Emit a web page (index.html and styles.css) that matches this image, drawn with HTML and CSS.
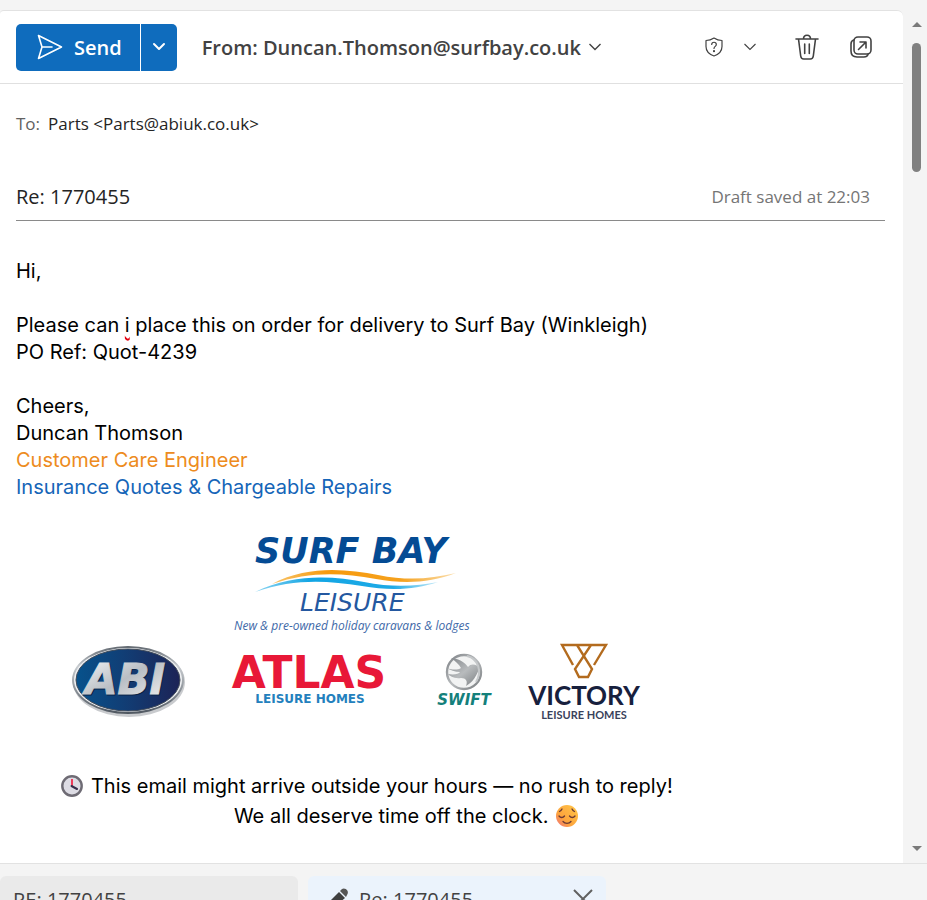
FILE: index.html
```
<!DOCTYPE html>
<html lang="en">
<head>
    <meta charset="UTF-8">
    <meta name="viewport" content="width=device-width, initial-scale=1.0">
    <title>Re: 1770455</title>
    <link rel="stylesheet" href="styles.css">
</head>
<body>
    <div class="workspace">
        <main class="compose">
            <header class="toolbar">
                <div class="send-group">
                    <button class="send" type="button">
                        <svg width="26" height="26" viewBox="0 0 26 26" fill="none" stroke="currentColor" stroke-width="1.6" stroke-linejoin="round">
                            <path d="M1.5 1.5 L24.5 13 L1.5 24.5 L5 13 Z M5 13 H15" stroke-linecap="round"/>
                        </svg>
                        Send
                    </button>
                    <button class="send-more" type="button" aria-label="Send options">
                        <svg width="12" height="8" viewBox="0 0 12 8" fill="none" stroke="currentColor" stroke-width="2" stroke-linecap="round" stroke-linejoin="round"><path d="M1 1 L6 6 L11 1"/></svg>
                    </button>
                </div>
                <button class="from" type="button">
                    From: Duncan.Thomson@surfbay.co.uk
                    <svg width="12" height="8" viewBox="0 0 12 8" fill="none" stroke="currentColor" stroke-width="1.4"><path d="M.5 1 L6 6.500 L11.500 1"/></svg>
                </button>
                <div class="tools">
                    <button class="tool sensitivity" type="button" aria-label="Sensitivity">
                        <svg width="18" height="20" viewBox="0 0 18 20" fill="none" stroke="currentColor" stroke-width="1.2" stroke-linejoin="round" stroke-linecap="round">
                            <path d="M9 1 C11.500 2.700 14 3.500 17 3.500 V9.500 C17 14 14 17.200 9 19 C4 17.200 1 14 1 9.500 V3.500 C4 3.500 6.500 2.700 9 1 Z"/>
                            <path d="M6.700 7.500 C6.700 4.500 11.300 4.500 11.300 7.500 C11.300 9.400 9 9.300 9 11.500"/>
                            <circle cx="9" cy="14.200" r=".5" fill="currentColor"/>
                        </svg>
                        <svg class="chevron" width="12" height="8" viewBox="0 0 12 8" fill="none" stroke="currentColor" stroke-width="1.1"><path d="M.5 1 L6 6.500 L11.500 1"/></svg>
                    </button>
                    <button class="tool" type="button" aria-label="Discard">
                        <svg width="24" height="26" viewBox="0 0 24 26" fill="none" stroke="currentColor" stroke-width="1.6" stroke-linecap="round">
                            <path d="M1 5 H23 M8.500 5 C8.500 0 15.500 0 15.500 5 M3.500 5 L5.700 22 C5.900 23.800 7 25 8.700 25 H15.300 C17 25 18.100 23.800 18.300 22 L20.500 5 M9.700 10 V19.500 M14.300 10 V19.500"/>
                        </svg>
                    </button>
                    <button class="tool" type="button" aria-label="Open in new window">
                        <svg width="22" height="22" viewBox="0 0 22 22" fill="none" stroke="currentColor" stroke-width="1.6" stroke-linecap="round" stroke-linejoin="round">
                            <rect x="4" y="1" width="17" height="17" rx="4"/>
                            <path d="M3.700 4 C2 4.500 1 6 1 8 V15 C1 18.800 3.200 21 7 21 H14 C16 21 17.500 20 18 18.500"/>
                            <path d="M8.500 13.500 L16 6 M10 6 H16 V12"/>
                        </svg>
                    </button>
                </div>
            </header>

            <div class="recipients">
                <span class="label">To:</span>
                <span>Parts &lt;Parts@abiuk.co.uk&gt;</span>
            </div>

            <div class="subject-row">
                <input class="subject" type="text" value="Re: 1770455" aria-label="Subject">
                <span class="saved">Draft saved at 22:03</span>
            </div>

            <article class="message">
                <p>Hi,</p>
                <p>Please can <span class="misspelt">i</span> place this on order for delivery to Surf Bay (Winkleigh)<br>PO Ref: Quot-4239</p>
                <p>
                    Cheers,<br>
                    Duncan Thomson<br>
                    <span class="role">Customer Care Engineer</span><br>
                    <span class="team">Insurance Quotes &amp; Chargeable Repairs</span>
                </p>

                <div class="logos">
                    <svg class="surfbay" width="250" height="104" viewBox="0 0 250 104">
                        <defs>
                            <linearGradient id="sand"><stop offset="0" stop-color="#f7c56e"/><stop offset=".3" stop-color="#f79a0c"/><stop offset=".7" stop-color="#f5a11d"/><stop offset="1" stop-color="#fbe0b0"/></linearGradient>
                            <linearGradient id="sea"><stop offset="0" stop-color="#8fd6f2"/><stop offset=".3" stop-color="#12a5e4"/><stop offset=".75" stop-color="#1eaae6"/><stop offset="1" stop-color="#c7eaf8"/></linearGradient>
                        </defs>
                        <text class="surf-name" x="25" y="30">SURF BAY</text>
                        <path fill="url(#sand)" d="M42 51 C78 32 116 36 148 42 C178 48 200 46 226 40 C200 50 174 51 146 46 C108 39 78 39 42 51 Z"/>
                        <path fill="url(#sea)" d="M25 59 C63 40 104 43 134 49 C164 55 187 53 208 49 C185 57 160 58 132 53 C94 47 63 46 25 59 Z"/>
                        <text class="surf-leisure" x="70" y="78">LEISURE</text>
                        <text class="surf-tag" x="4" y="97">New &amp; pre-owned holiday caravans &amp; lodges</text>
                    </svg>
                    <div class="brands">
                        <svg width="116" height="74" viewBox="0 0 116 74">
                            <defs>
                                <linearGradient id="abi-blue"><stop offset="0" stop-color="#07528c"/><stop offset=".5" stop-color="#123c73"/><stop offset="1" stop-color="#1c2356"/></linearGradient>
                                <linearGradient id="steel" x2="1" y2="1"><stop offset="0" stop-color="#fafafa"/><stop offset=".5" stop-color="#b9bec4"/><stop offset="1" stop-color="#f3f3f3"/></linearGradient>
                                <linearGradient id="rim" x2="0" y2="1"><stop offset="0" stop-color="#5f666e"/><stop offset=".3" stop-color="#c8ccd0"/><stop offset="1" stop-color="#4e565f"/></linearGradient>
                            </defs>
                            <ellipse cx="59" cy="38" rx="56" ry="35" fill="#c9cbce"/>
                            <ellipse cx="58" cy="36" rx="56" ry="34" fill="url(#rim)"/>
                            <ellipse cx="58" cy="36" rx="54" ry="32" fill="#eef0f2"/>
                            <ellipse cx="58" cy="36" rx="52" ry="31" fill="url(#abi-blue)" stroke="#444e5c"/>
                            <text class="abi-name" x="16" y="51" fill="#0b2347" stroke="#0b2347">ABI</text>
                            <text class="abi-name" x="15" y="50" fill="url(#steel)" stroke="url(#steel)">ABI</text>
                        </svg>
                        <svg width="182" height="64" viewBox="0 0 182 64">
                            <text class="atlas-name" x="90" y="39" text-anchor="middle">ATLAS</text>
                            <text class="atlas-tag" x="91" y="54" text-anchor="middle">LEISURE HOMES</text>
                        </svg>
                        <svg width="60" height="58" viewBox="0 0 60 58">
                            <defs><linearGradient id="silver" x2="1" y2="1"><stop offset="0" stop-color="#7e8286"/><stop offset=".5" stop-color="#b8bbbd"/><stop offset="1" stop-color="#777b7e"/></linearGradient></defs>
                            <circle cx="30" cy="20" r="17" fill="#f2f3f3" stroke="url(#silver)" stroke-width="2.400"/>
                            <path fill="url(#silver)" d="M17 6 C27 7 31 11 34 15 C37 11 42 12 47 16 C43 18 43 28 32 34 C34 29 32 26 27 26 C20 27 16 24 14 22 C20 23 25 22 26 20 C21 20 16 18 13 16 C18 18 24 18 27 16 C25 12 21 9 17 6 Z"/>
                            <path d="M33 4 C45 7 48 20 42 30" fill="none" stroke="#c5c8ca" stroke-width="2"/>
                            <text class="swift-name" x="30" y="53" text-anchor="middle">SWIFT</text>
                        </svg>
                        <svg width="114" height="80" viewBox="0 0 114 80">
                            <path d="M46 24 L35 4 H50 L65 28 L61 36 H52 L48 28 L64 4 H79 L67 24 M50 4 H64" fill="none" stroke="#b36b1e" stroke-width="2.400"/>
                            <text class="victory-name" x="57" y="64" text-anchor="middle">VICTORY</text>
                            <text class="victory-tag" x="57" y="78" text-anchor="middle">LEISURE HOMES</text>
                        </svg>
                    </div>
                </div>

                <div class="note">
                    <p>
                        <svg class="emoji" width="24" height="24" viewBox="0 0 24 24">
                            <circle cx="12" cy="12" r="9.700" fill="#dddce4" stroke="#6e6b74" stroke-width="2.400"/>
                            <path d="M12 12 V5" stroke="#ee3e5d" stroke-width="2"/>
                            <path d="M11.500 12 L17 15" stroke="#37304d" stroke-width="2" stroke-linecap="round"/>
                        </svg>
                        This email might arrive outside your hours — no rush to reply!
                    </p>
                    <p class="indent">
                        We all deserve time off the clock.
                        <svg class="emoji" width="24" height="24" viewBox="0 0 24 24">
                            <defs><linearGradient id="face" x1="1" y1="0" x2="0" y2="1"><stop offset="0" stop-color="#ffc84a"/><stop offset=".65" stop-color="#fda33c"/><stop offset="1" stop-color="#ef6e85"/></linearGradient></defs>
                            <circle cx="12" cy="12" r="11" fill="url(#face)"/>
                            <path d="M4 12 C5.500 14 8 14 9.500 12 M14.500 12 C16 14 18.500 14 20 12 M8 17.500 C10 20 14 20 16 17.500 M4.500 7.500 C5.500 7 6.500 6 7 5 M19.500 7.500 C18.500 7 17.500 6 17 5" fill="none" stroke="#6b3a35" stroke-width="1.300" stroke-linecap="round"/>
                        </svg>
                    </p>
                </div>
            </article>
        </main>

        <div class="scrollbar" aria-hidden="true">
            <span class="arrow-up"></span>
            <span class="track"><span class="thumb"></span></span>
            <span class="arrow-down"></span>
        </div>
    </div>

    <nav class="tabs">
        <div class="tab"><a href="#">RE: 1770455</a></div>
        <div class="tab active">
            <svg width="24" height="24" viewBox="0 0 24 24" fill="#3f3f3f">
                <path d="M1 23 L3 16 L14 5 L20 11 L8 21 Z"/>
                <path d="M15 4 L17 2 C20 0 25 4 22 8 L21 10 Z" fill="#555"/>
            </svg>
            <a href="#">Re: 1770455</a>
            <button class="close" type="button" aria-label="Close">
                <svg width="20" height="20" viewBox="0 0 20 20" fill="none" stroke="currentColor" stroke-width="2"><path d="M1 1 L19 19 M19 1 L1 19"/></svg>
            </button>
        </div>
    </nav>
</body>
</html>
```

FILE: styles.css
```
* {
    box-sizing: border-box;
}
body {
    display: flex;
    flex-direction: column;
    height: 100vh;
    margin: 0;
    padding-top: 10px;
    overflow: hidden;
    background-color: #f4f4f4;
    color: #242424;
    font-family: "Open Sans", "Noto Sans", sans-serif;
    font-size: 17px;
}
p {
    margin: 0;
}
svg {
    flex: none;
    overflow: visible;
}
button {
    padding: 0;
    border: none;
    background: none;
    color: inherit;
    font: inherit;
    cursor: pointer;
}
.workspace {
    display: flex;
    flex: 1;
    min-height: 0;
    border-bottom: 1px solid #e2e2e2;
}
.compose {
    flex: 1;
    overflow: hidden;
    border-top: 1px solid #e2e2e2;
    border-top-right-radius: 6px;
    border-top-left-radius: 4px;
    background: white;
}

/* Toolbar */
.toolbar {
    display: flex;
    align-items: center;
    height: 73px;
    padding: 0 31px 0 16px;
    border-bottom: 1px solid #e0e0e0;
}
.send-group {
    display: flex;
    height: 47px;
    border-radius: 5px;
    overflow: hidden;
    background-color: #0f6cbd;
    color: white;
}
.send {
    display: flex;
    align-items: center;
    gap: 11px;
    padding: 0 18px 0 21px;
    font-size: 20px;
    font-weight: 600;
}
.send-more {
    display: flex;
    align-items: center;
    justify-content: center;
    width: 37px;
    border-left: 1px solid white;
}
.from {
    display: flex;
    align-items: center;
    gap: 8px;
    margin-left: 25px;
    color: #424242;
    font-size: 20px;
    font-weight: 600;
}
.tools {
    display: flex;
    align-items: center;
    gap: 31px;
    margin-left: auto;
    color: #424242;
}
.tool {
    display: flex;
    align-items: center;
}
.sensitivity {
    gap: 21px;
    margin-right: 8px;
}

/* Address and subject */
.recipients {
    display: flex;
    gap: 8px;
    padding: 27px 16px 0;
    line-height: 25px;
}
.label {
    color: #616161;
}
.subject-row {
    display: flex;
    align-items: center;
    height: 48px;
    margin: 37px 18px 0 16px;
    padding-right: 15px;
    border-bottom: 1px solid #8a8a8a;
}
.subject {
    flex: 1;
    min-width: 0;
    padding: 0;
    border: none;
    outline: none;
    color: #242424;
    font: inherit;
    font-size: 20px;
}
.saved {
    color: #757575;
}

/* Message body */
.message {
    padding: 37px 16px;
    color: black;
    font-family: Inter, Roboto, "Liberation Sans", sans-serif;
    font-size: 20px;
    line-height: 27px;
}
.message > p {
    margin-bottom: 27px;
}
.misspelt {
    text-decoration: underline wavy #e3000f 2px;
    text-underline-offset: 2px;
}
.role {
    color: #ed8b20;
}
.team {
    color: #1565b8;
}
.logos {
    display: flex;
    flex-direction: column;
    gap: 4px;
    width: 680px;
    padding-top: 5px;
    padding-left: 54px;
}
.surfbay {
    margin-left: 160px;
}
.brands {
    display: flex;
    align-items: center;
    gap: 33px;
}

/* Logo lettering */
.surf-name {
    fill: #044b94;
    font: italic bold 35px "DejaVu Sans", sans-serif;
}
.surf-leisure {
    fill: #2458a0;
    font: italic 25px "DejaVu Sans", sans-serif;
}
.surf-tag {
    fill: #4169a8;
    font: italic 12px "Open Sans", sans-serif;
}
.abi-name {
    font: italic bold 42px "DejaVu Sans", sans-serif;
}
.atlas-name {
    fill: #e81837;
    font: bold 44px "DejaVu Sans", sans-serif;
}
.atlas-tag {
    fill: #2380bd;
    font: bold 12px "DejaVu Sans", sans-serif;
}
.swift-name {
    fill: #14807b;
    font: italic bold 15px "DejaVu Sans", sans-serif;
}
.victory-name {
    fill: #17203d;
    font: bold 26px Lato, sans-serif;
}
.victory-tag {
    fill: #3a425b;
    font: bold 11px Lato, sans-serif;
}

/* Closing note */
.note {
    width: 700px;
    margin-top: 50px;
    line-height: 30px;
    text-align: center;
}
.indent {
    padding-left: 82px;
}
.emoji {
    margin: 0 1px;
    vertical-align: -5px;
}

/* Scrollbar */
.scrollbar {
    display: flex;
    flex-direction: column;
    align-items: center;
    width: 24px;
    padding: 12px 0 12px 3px;
}
.arrow-up,
.arrow-down {
    border: 5px solid transparent;
}
.arrow-up {
    border-top: none;
    border-bottom-color: #7a7a7a;
}
.arrow-down {
    border-bottom: none;
    border-top-color: #7a7a7a;
}
.track {
    flex: 1;
    padding-top: 16px;
}
.thumb {
    display: block;
    width: 9px;
    height: 129px;
    border-radius: 5px;
    background: #808080;
}

/* Draft tabs */
.tabs {
    display: flex;
    flex: none;
    gap: 10px;
    height: 36px;
    padding-top: 12px;
    overflow: hidden;
}
.tab {
    display: flex;
    align-items: center;
    width: 298px;
    height: 46px;
    padding: 0 13px;
    border-radius: 6px;
    background: #eaeaea;
    font-size: 20px;
}
.tab.active {
    gap: 10px;
    background: #ebf3fc;
    padding-left: 17px;
}
.tab a {
    color: #424242;
    text-decoration: none;
}
.close {
    display: flex;
    margin-left: auto;
    color: #616161;
}
```
